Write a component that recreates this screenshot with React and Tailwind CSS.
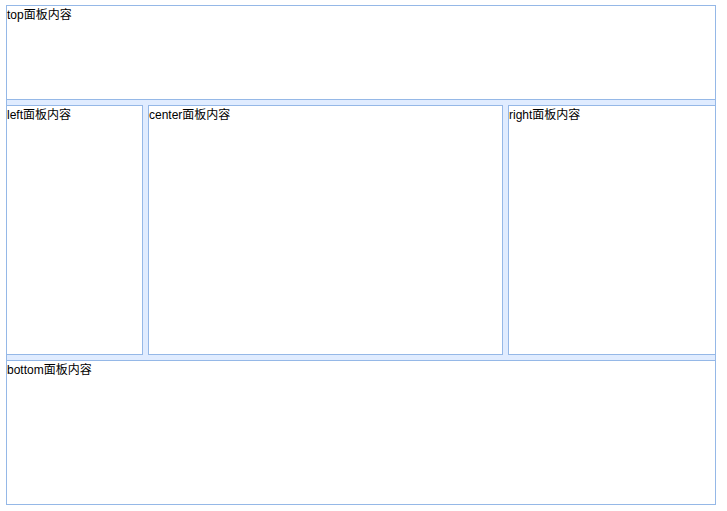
// Border layout: north / west / center / east / south panels split by light blue bars.
const FONT = 'font-["Liberation_Sans","Noto_Sans_CJK_SC",sans-serif] text-[12px] leading-[18px] text-black'

function Panel({ label, className = '' }) {
  return (
    <div className={`bg-white border-[#95B8E7] ${className}`}>
      <div className={FONT}>{label}面板内容</div>
    </div>
  )
}

export default function App() {
  return (
    <div className="h-[511px] w-[727px] bg-white pl-[6px] pt-[5px]">
      <div className="flex h-[500px] w-[710px] flex-col gap-[5px] border-x border-[#95B8E7] bg-[#E0ECFF]">
        <Panel label="top" className="h-[95px] shrink-0 border-y" />

        <div className="flex h-[250px] shrink-0 gap-[5px]">
          <Panel label="left" className="w-[136px] shrink-0 border-y border-r" />
          <Panel label="center" className="w-[355px] shrink-0 border" />
          <Panel label="right" className="w-[207px] shrink-0 border-y border-l" />
        </div>

        <Panel label="bottom" className="h-[145px] shrink-0 border-y" />
      </div>
    </div>
  )
}
